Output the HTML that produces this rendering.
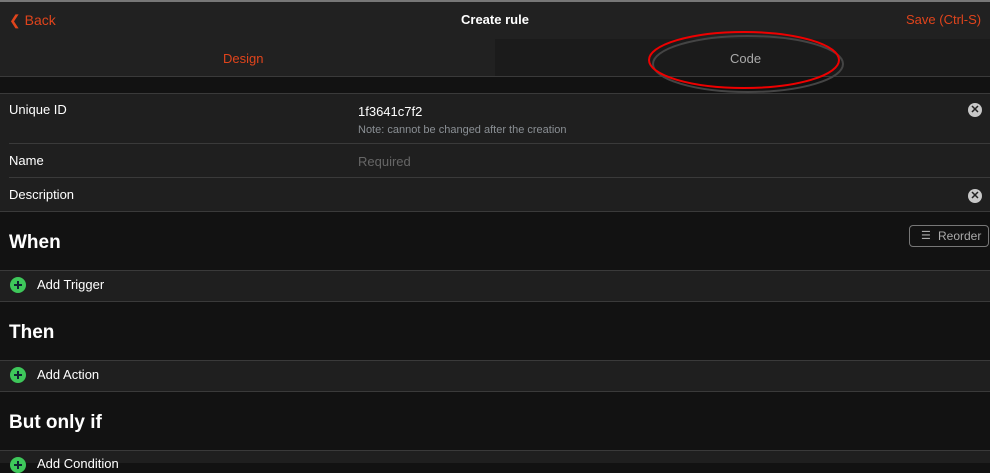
<!DOCTYPE html><html><head><style>
body{margin:0;width:990px;height:463px;overflow:hidden;background:#121212;font-family:"Liberation Sans",sans-serif;color:#fff;position:relative}
.a{position:absolute}
.line{position:absolute;left:0;width:990px;height:1px;background:#3a3a3a}
.t{position:absolute;font-size:13px;white-space:nowrap}
.h{position:absolute;font-size:19px;font-weight:bold;left:9px}
.plus{position:absolute;left:10px;width:16px;height:16px;border-radius:50%;background:#3ec75a}
.plus:before{content:"";position:absolute;left:4px;top:7px;width:8px;height:2px;background:#123}
.plus:after{content:"";position:absolute;left:7px;top:4px;width:2px;height:8px;background:#123}
.x{position:absolute;left:968px;width:14px;height:14px;border-radius:50%;background:#c8c8c8;color:#222;font-size:11px;line-height:14px;text-align:center;font-weight:bold}
</style></head><body>
<div class="a" style="left:0;top:0;width:990px;height:2px;background:#777"></div>
<div class="a" style="left:0;top:2px;width:990px;height:37px;background:#212121"></div>
<div class="t" style="left:9px;top:12px;color:#e0441c;font-size:14px">❮ Back</div>
<div class="t" style="left:461px;top:12px;font-weight:bold">Create rule</div>
<div class="t" style="left:906px;top:12px;color:#e0441c">Save (Ctrl-S)</div>
<div class="a" style="left:0;top:39px;width:495px;height:37px;background:#212121"></div>
<div class="a" style="left:495px;top:39px;width:495px;height:37px;background:#1b1b1b"></div>
<div class="t" style="left:223px;top:51px;color:#e0441c">Design</div>
<div class="t" style="left:730px;top:51px;color:#aaa">Code</div>
<div class="line" style="top:76px"></div>
<div class="line" style="top:93px"></div>
<div class="a" style="left:0;top:94px;width:990px;height:117px;background:#1f1f1f"></div>
<div class="t" style="left:9px;top:102px">Unique ID</div>
<div class="t" style="left:358px;top:104px">1f3641c7f2</div>
<div class="t" style="left:358px;top:124px;font-size:11px;color:#8a8f94">Note: cannot be changed after the creation</div>
<div class="x" style="top:103px">✕</div>
<div class="line" style="top:143px;left:9px"></div>
<div class="t" style="left:9px;top:153px">Name</div>
<div class="t" style="left:358px;top:154px;color:#666">Required</div>
<div class="line" style="top:177px;left:9px"></div>
<div class="t" style="left:9px;top:187px">Description</div>
<div class="x" style="top:189px">✕</div>
<div class="line" style="top:211px"></div>
<div class="h" style="top:232px">When</div>
<div class="a" style="left:909px;top:225px;width:80px;height:22px;border:1px solid #777;border-radius:4px;box-sizing:border-box;color:#aaa;font-size:12px;line-height:20px;padding-left:28px">Reorder<span class="a" style="left:11px;top:0;font-size:11px">☰</span></div>
<div class="line" style="top:270px"></div>
<div class="a" style="left:0;top:271px;width:990px;height:30px;background:#1f1f1f"></div>
<div class="plus" style="top:277px"></div><div class="t" style="left:37px;top:277px">Add Trigger</div>
<div class="line" style="top:301px"></div>
<div class="h" style="top:322px">Then</div>
<div class="line" style="top:360px"></div>
<div class="a" style="left:0;top:361px;width:990px;height:30px;background:#1f1f1f"></div>
<div class="plus" style="top:367px"></div><div class="t" style="left:37px;top:367px">Add Action</div>
<div class="line" style="top:391px"></div>
<div class="h" style="top:412px">But only if</div>
<div class="line" style="top:450px"></div>
<div class="a" style="left:0;top:451px;width:990px;height:12px;background:#1f1f1f"></div>
<div class="plus" style="top:457px"></div><div class="t" style="left:37px;top:456px">Add Condition</div>
<svg class="a" style="left:645px;top:27px" width="205" height="70"><ellipse cx="101" cy="35" rx="95" ry="28" fill="none" stroke="#444" stroke-width="2" transform="translate(2,2)"/><ellipse cx="99" cy="33" rx="95" ry="28" fill="none" stroke="#e00" stroke-width="2"/></svg>
</body></html>
